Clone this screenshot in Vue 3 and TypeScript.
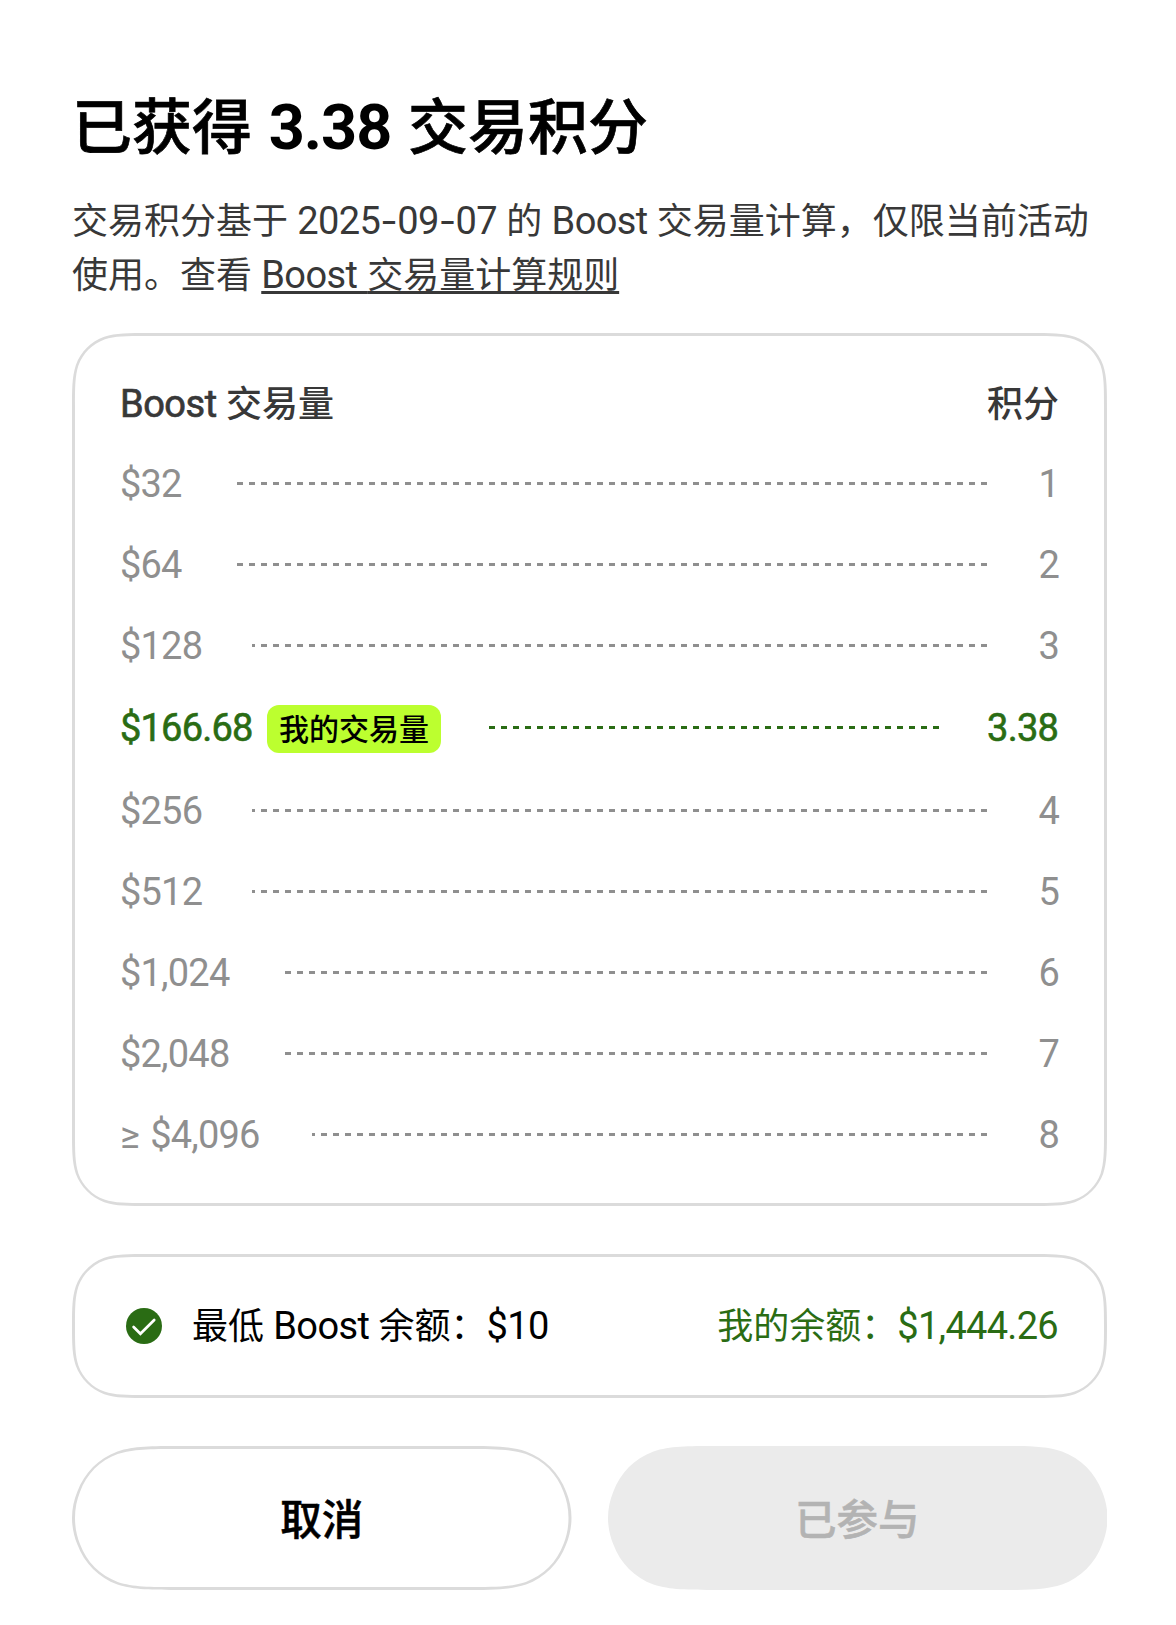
<script setup lang="ts">
interface Tier {
  volume: string
  points: string
  leader: number
  mine?: boolean
}

const tiers: Tier[] = [
  { volume: '$32', points: '1', leader: 750 },
  { volume: '$64', points: '2', leader: 750 },
  { volume: '$128', points: '3', leader: 735 },
  { volume: '$166.68', points: '3.38', leader: 450, mine: true },
  { volume: '$256', points: '4', leader: 735 },
  { volume: '$512', points: '5', leader: 735 },
  { volume: '$1,024', points: '6', leader: 702 },
  { volume: '$2,048', points: '7', leader: 702 },
  { volume: '≥ $4,096', points: '8', leader: 675 },
]

// Rounded rectangle with smoothed (continuous) corners.
// When the height leaves no room for smoothing, the sides fall back to a circular end.
function smooth(x: number, y: number, w: number, h: number, r: number): string {
  const ex = Math.min(1.52866 * r, w / 2)
  const ey = Math.min(1.52866 * r, h / 2)
  const k = (ey - r) / (0.52866 * r)
  const corner = (cx: number, cy: number, sx: number, sy: number, fromTop: boolean): string => {
    const p = (a: number, b: number) => `${(cx + sx * a).toFixed(2)} ${(cy + sy * b).toFixed(2)}`
    const pts: [number, number][] = [
      [ex, 0], [1.0885 * r, 0], [0.8684 * r, 0], [0.6315 * r, 0.0749 * r],
      [0.3728 * r, 0.1691 * r], [0.1691 * r, 0.3728 * r], [0.0749 * r, 0.6315 * r],
      [0.028 * (1 - k) * r, (0.745 + 0.1234 * k) * r], [0, (0.87 + 0.2185 * k) * r], [0, ey],
    ]
    const o = fromTop ? pts : [...pts].reverse()
    const q = o.map(([a, b]) => p(a, b))
    return `${q[0]} C${q[1]} ${q[2]} ${q[3]} C${q[4]} ${q[5]} ${q[6]} C${q[7]} ${q[8]} ${q[9]}`
  }
  return `M${corner(x + w, y, -1, 1, true)} L${corner(x + w, y + h, -1, -1, false)} L${corner(x, y + h, 1, -1, true)} L${corner(x, y, 1, 1, false)}Z`
}

function ring(w: number, h: number, r: number): string {
  return smooth(0, 0, w, h, r) + smooth(3, 3, w - 6, h - 6, r - 4.5)
}
</script>

<template>
  <main class="sheet">
    <h1 class="title">已获得<span class="lat"> 3.38 </span>交易积分</h1>
    <p class="desc">
      交易积分基于<span class="lat"> 2025<span class="dash">-</span>09<span class="dash">-</span>07 </span>的<span class="lat"> Boost </span>交易量计算，仅限当前活动使用。查看<span class="lat">&nbsp;</span><a class="link"><span class="lat">Boost </span>交易量计算规则</a>
    </p>

    <section class="card table">
      <svg class="frame" width="1035" height="873"><path :d="ring(1035, 873, 51)" fill-rule="evenodd" fill="#dbdbdb" /></svg>
      <div class="row head">
        <span><span class="lat">Boost </span>交易量</span>
        <span>积分</span>
      </div>
      <div v-for="t in tiers" :key="t.volume" class="row" :class="{ mine: t.mine }">
        <span class="lat volume">{{ t.volume }}</span>
        <span v-if="t.mine" class="badge">我的交易量</span>
        <i class="leader" :style="{ width: t.leader + 'px' }"></i>
        <span class="lat points">{{ t.points }}</span>
      </div>
    </section>

    <section class="card balance">
      <svg class="frame" width="1035" height="144"><path :d="ring(1035, 144, 51)" fill-rule="evenodd" fill="#dbdbdb" /></svg>
      <svg class="check" width="36" height="36" viewBox="0 0 36 36">
        <circle cx="18" cy="18" r="18" fill="#2a6c14" />
        <path d="M7.6 19 14.4 25.8 28.2 12" fill="none" stroke="#fff" stroke-width="2.7" stroke-linecap="round" />
      </svg>
      <span class="min">最低<span class="lat"> Boost </span>余额：<span class="lat">$10</span></span>
      <span class="own">我的余额：<span class="lat">$1,444.26</span></span>
    </section>

    <div class="actions">
      <button class="btn" type="button">
        <svg class="frame" width="499.5" height="144"><path :d="ring(499.5, 144, 72)" fill-rule="evenodd" fill="#dbdbdb" /></svg>
        <span>取消</span>
      </button>
      <button class="btn disabled" type="button" disabled>
        <svg class="frame" width="499.5" height="144"><path :d="smooth(0, 0, 499.5, 144, 72)" fill="#ebebeb" /></svg>
        <span>已参与</span>
      </button>
    </div>
  </main>
</template>

<style>
body {
  background: #fff;
}
</style>

<style scoped>
.sheet {
  box-sizing: border-box;
  width: 1176px;
  height: 1625px;
  padding: 78px 69px 35px 72px;
  display: flex;
  flex-direction: column;
  overflow: hidden;
  font: 400 36px/54px "Noto Sans CJK SC", sans-serif;
  color: #383838;
}
.lat {
  font-family: Roboto, "Noto Sans CJK SC", sans-serif;
  font-size: 38px;
  letter-spacing: -0.6px;
  word-spacing: 0.4px;
  line-height: 1;
  white-space: pre-wrap;
}
.dash {
  font-family: Inter, sans-serif;
}
.title {
  margin: 0;
  height: 90px;
  font-size: 60px;
  line-height: 90px;
  font-weight: 500;
  -webkit-text-stroke: 0.7px #000;
  color: #000;
}
.title .lat {
  font-size: 63px;
  font-weight: 700;
  letter-spacing: -1px;
  word-spacing: 2px;
  -webkit-text-stroke: 0;
}
.desc {
  margin: 23px 0 0;
  height: 142px;
}
.link {
  text-decoration: underline;
  text-decoration-thickness: 3px;
  text-underline-offset: 3px;
  text-decoration-skip-ink: none;
}
.link .lat {
  word-spacing: 1px;
}
.card {
  position: relative;
  box-sizing: border-box;
}
.frame {
  position: absolute;
  left: 0;
  top: 0;
}
.table {
  height: 873px;
  padding: 48px;
  display: flex;
  flex-direction: column;
  gap: 36px;
}
.row {
  box-sizing: border-box;
  height: 45px;
  padding-bottom: 2px;
  display: flex;
  align-items: center;
  color: #8f8f8f;
}
.row .lat {
  letter-spacing: -0.8px;
}
.row .volume {
  word-spacing: 2.5px;
}
.head {
  padding-bottom: 6px;
  justify-content: space-between;
  font-weight: 500;
  color: #383838;
}
.head .lat {
  font-weight: 400;
  letter-spacing: -0.5px;
  -webkit-text-stroke: 0.7px #383838;
}
.mine {
  height: 48px;
  padding-bottom: 0;
  color: #2a6c14;
}
.mine .lat {
  padding-bottom: 2px;
  -webkit-text-stroke: 0.6px #2a6c14;
}
.badge {
  height: 48px;
  padding: 0 12px;
  margin-left: 12px;
  border-radius: 12px;
  background: #bcff2f;
  color: #000;
  font-size: 30px;
  font-weight: 500;
  line-height: 44px;
}
.mine .volume {
  width: 135px;
}
.leader {
  height: 3px;
  margin: 0 48px 0 auto;
  background: repeating-linear-gradient(to left, currentColor 0 6px, transparent 6px 12px);
}
.mine .leader {
  margin-bottom: 4px;
}
.points {
  box-sizing: border-box;
  width: 24px;
  text-align: right;
}
.mine .points {
  width: 72px;
  padding-right: 1px;
  white-space: nowrap;
}
.balance {
  height: 144px;
  margin-top: 48px;
  padding: 0 49px 0 54px;
  display: flex;
  align-items: center;
  color: #000;
}
.min,
.own {
  padding-bottom: 6px;
}
.min {
  margin-left: 30px;
}
.own {
  margin-left: auto;
  color: #2a6c14;
}
.own .lat {
  letter-spacing: -0.7px;
}
.actions {
  margin-top: 48px;
  display: flex;
  gap: 36px;
}
.btn {
  position: relative;
  flex: 1;
  height: 144px;
  padding: 0 0 3px;
  border: 0;
  background: none;
  font: 500 41.5px/60px "Noto Sans CJK SC", sans-serif;
  -webkit-text-stroke: 0.5px currentColor;
  color: #000;
}
.btn span {
  position: relative;
}
.disabled {
  color: #b3b3b3;
}
</style>
